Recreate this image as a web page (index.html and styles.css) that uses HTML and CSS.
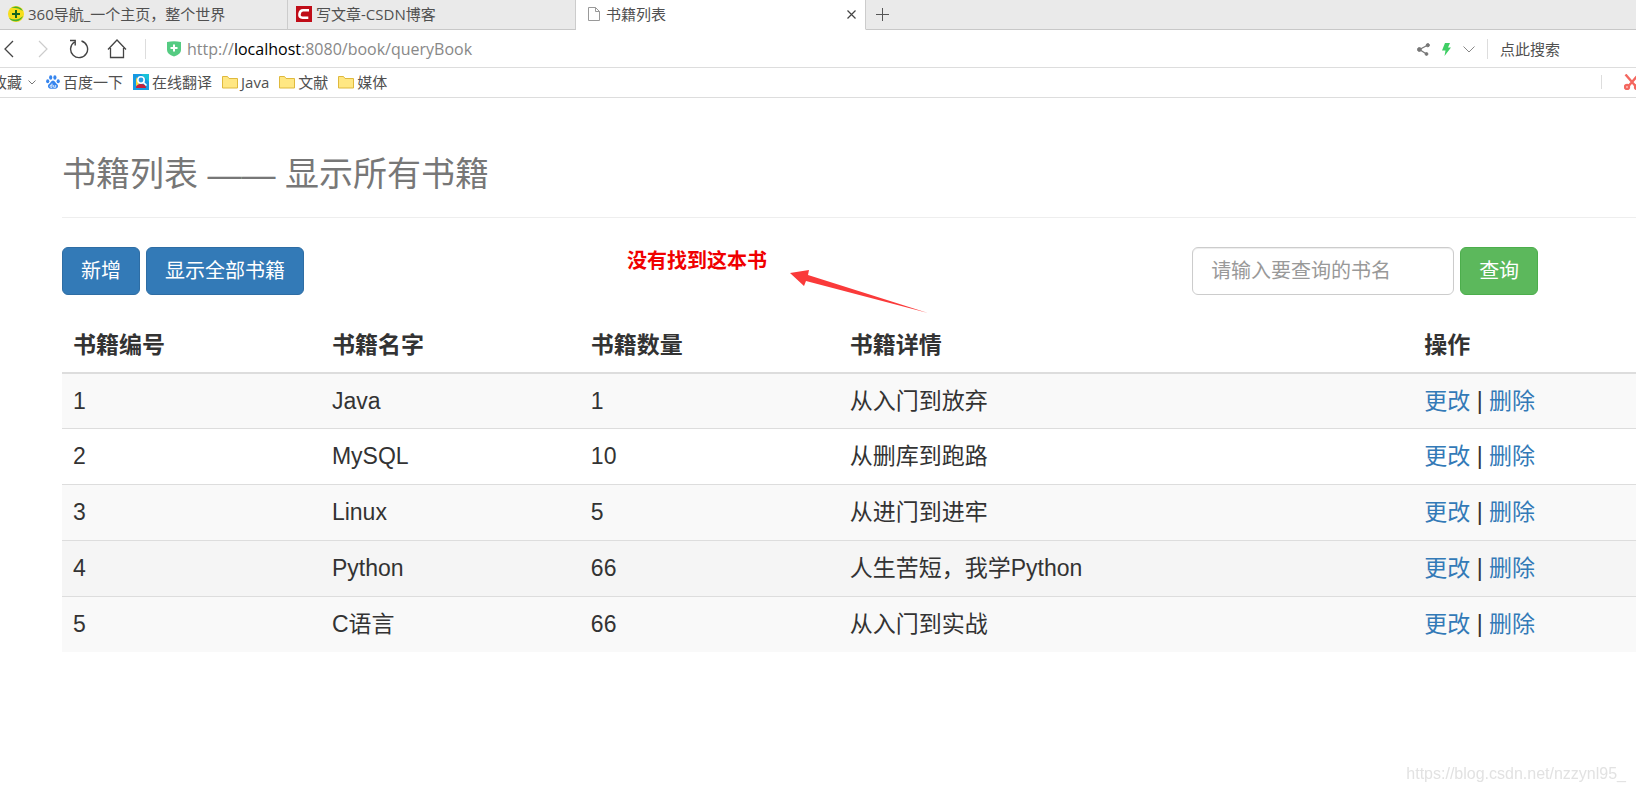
FILE: index.html
```html
<!DOCTYPE html>
<html lang="zh-CN">
<head>
<meta charset="utf-8">
<meta name="viewport" content="width=device-width, initial-scale=1">
<title>书籍列表</title>
<link rel="stylesheet" href="styles.css">
</head>
<body>
<header class="browser">
  <nav class="tabs" aria-label="标签页">
    <a class="tab" href="#">
      <svg class="icon" width="16" height="16" viewBox="0 0 16 16"><circle cx="8" cy="8" r="8" fill="#f7de1c"/><path d="M3 2A8 8 0 0 1 15 5Q9 1 3 2ZM15 10A8 8 0 0 1 1 12Q9 16 15 10Z" fill="#45b030"/><path d="M8 4v8M4 8h8" stroke="#17651f" stroke-width="2"/></svg>
      <span>360导航_一个主页，整个世界</span>
    </a>
    <a class="tab" href="#">
      <svg class="icon" width="16" height="16" viewBox="0 0 16 16"><rect width="16" height="16" fill="#c00d18"/><path d="M13 4.300H7Q4 4.300 3.500 8T6.500 11.700h5.800" fill="none" stroke="#fff" stroke-width="2.600"/></svg>
      <span>写文章-CSDN博客</span>
    </a>
    <a class="tab tab-active" href="#" aria-current="page">
      <svg class="icon" width="12" height="14" viewBox="0 0 12 14" fill="none" stroke="#999"><path d="M.5.500h7l4 4v9H.500zM7.500.500v4h4"/></svg>
      <span>书籍列表</span>
      <button class="icon-button tab-close" type="button" aria-label="关闭标签页"><svg width="9" height="9" viewBox="0 0 9 9" stroke="#444" stroke-width="1.200"><path d="M.5.500l8 8M8.500.500l-8 8"/></svg></button>
    </a>
    <button class="icon-button tab-new" type="button" aria-label="新建标签页"><svg width="13" height="13" viewBox="0 0 13 13" stroke="#555"><path d="M6.500 0v13M0 6.500h13"/></svg></button>
  </nav>

  <div class="address">
    <button class="icon-button" type="button" aria-label="后退"><svg width="10" height="18" viewBox="0 0 10 18" fill="none" stroke="#444" stroke-width="1.300"><path d="M9 1L1 9l8 8"/></svg></button>
    <button class="icon-button forward" type="button" aria-label="前进"><svg width="10" height="18" viewBox="0 0 10 18" fill="none" stroke="#ccc" stroke-width="1.200"><path d="M1 1l8 8-8 8"/></svg></button>
    <button class="icon-button" type="button" aria-label="刷新"><svg width="20" height="20" viewBox="0 0 20 20" fill="none" stroke="#444" stroke-width="1.400"><path d="M12.500 2A8.500 8.500 0 1 1 5.500 3M1 1.500h5.200v5"/></svg></button>
    <button class="icon-button" type="button" aria-label="主页"><svg width="20" height="20" viewBox="0 0 20 20" fill="none" stroke="#444" stroke-width="1.300"><path d="M1 10.500L10 1l9 9.500M3.500 9v9.500h13V9"/></svg></button>
    <span class="divider"></span>
    <div class="location">
      <svg width="14" height="16" viewBox="0 0 14 16"><path d="M0 1Q7-.5 14 1v8q0 4-7 6.500Q0 13 0 9z" fill="#55cb82"/><path d="M7 3.500v7M3.500 7h7" stroke="#fff" stroke-width="2"/></svg>
      <span>http://<span class="host">localhost</span>:8080/book/queryBook</span>
    </div>
    <div class="address-tools">
      <button class="icon-button" type="button" aria-label="分享"><svg width="13" height="13" viewBox="0 0 13 13" fill="#777" stroke="#777"><path d="M11 2L2.500 6.500 9.500 11" fill="none" stroke-width="1.300"/><circle cx="10.800" cy="2.200" r="1.600"/><circle cx="2.400" cy="6.500" r="1.900"/><circle cx="9.500" cy="11" r="1.400"/></svg></button>
      <button class="icon-button" type="button" aria-label="极速模式"><svg width="9" height="13" viewBox="0 0 9 13"><path d="M3 0h5L6 4.500h3L2.500 13l1-5.500H0z" fill="#3fce64"/></svg></button>
      <button class="icon-button" type="button" aria-label="更多"><svg width="12" height="7" viewBox="0 0 12 7" fill="none" stroke="#888"><path d="M.5.500L6 6l5.500-5.500"/></svg></button>
      <span class="divider"></span>
      <a class="search-hint" href="#">点此搜索</a>
    </div>
  </div>

  <nav class="bookmarks" aria-label="收藏栏">
    <a class="bookmark bookmark-first" href="#"><span>收藏</span><svg class="caret" width="8" height="5" viewBox="0 0 8 5" fill="none" stroke="#777"><path d="M.5.500L4 4l3.500-3.500"/></svg></a>
    <a class="bookmark" href="#"><svg width="14" height="14" viewBox="0 0 14 14" fill="#3685ee"><ellipse cx="1.700" cy="6.200" rx="1.600" ry="2"/><ellipse cx="4.700" cy="2.500" rx="1.600" ry="2.200"/><ellipse cx="8.900" cy="2.500" rx="1.600" ry="2.200"/><ellipse cx="12.200" cy="6.200" rx="1.600" ry="2"/><path d="M7 5.500C9 5.500 9.500 8 11.200 9.300c1.500 1.200 1 4.200-1.700 4.400H4.500c-2.700-.2-3.200-3.200-1.700-4.400C4.500 8 5 5.500 7 5.500z"/><path d="M6 8.500v3.800H4.600q-1.200-1.100 0-2.200H6M7.700 10v2.300h2V10" fill="none" stroke="#fff" stroke-width=".8"/></svg><span>百度一下</span></a>
    <a class="bookmark" href="#"><svg width="16" height="16" viewBox="0 0 16 16"><rect width="16" height="16" fill="#1599e2"/><path d="M8 0h8v8z" fill="#19c2d8"/><path d="M3 14q0-4 5-4t5 4z" fill="#c81f3b"/><path d="M3 3v9l3-2z" fill="#f8d83a"/><circle cx="8" cy="6" r="3.200" fill="#279fe1" stroke="#fff" stroke-width="1.600"/><path d="M10.500 8.500l3 3" stroke="#fff" stroke-width="1.600"/></svg><span>在线翻译</span></a>
    <a class="bookmark" href="#"><svg width="16" height="14" viewBox="0 0 16 14"><path d="M.5 1.500h5l1.500 2h8.500v9.500H.500z" fill="#ffe783" stroke="#dfb93d"/></svg><span>Java</span></a>
    <a class="bookmark" href="#"><svg width="16" height="14" viewBox="0 0 16 14"><path d="M.5 1.500h5l1.500 2h8.500v9.500H.500z" fill="#ffe783" stroke="#dfb93d"/></svg><span>文献</span></a>
    <a class="bookmark" href="#"><svg width="16" height="14" viewBox="0 0 16 14"><path d="M.5 1.500h5l1.500 2h8.500v9.500H.500z" fill="#ffe783" stroke="#dfb93d"/></svg><span>媒体</span></a>
    <div class="bookmark-tools">
      <span class="divider divider-short"></span>
      <button class="icon-button" type="button" aria-label="截图"><svg width="16" height="16" viewBox="0 0 16 16" fill="none" stroke="#f4675f" stroke-width="2.400"><path d="M1.500.500l9.500 11M14.500.500L5 11.500"/><circle cx="3" cy="13" r="2"/><circle cx="13" cy="13" r="2"/></svg></button>
    </div>
  </nav>
</header>

<main class="page">
  <h1 class="title">书籍列表 —— 显示所有书籍</h1>

  <div class="toolbar">
    <div class="actions">
      <button class="btn btn-primary" type="button">新增</button>
      <button class="btn btn-primary" type="button">显示全部书籍</button>
    </div>
    <div class="message">
      <strong>没有找到这本书</strong>
      <svg class="arrow" width="138" height="43" viewBox="0 0 138 43"><path d="M0 3L19 0l-1 5L138 43 16 11l-2 5z" fill="#fa3a3a"/></svg>
    </div>
    <form class="search">
      <input class="search-input" type="text" placeholder="请输入要查询的书名" aria-label="书名">
      <button class="btn btn-success" type="button">查询</button>
    </form>
  </div>

  <table class="books">
    <colgroup><col class="col-short"><col class="col-short"><col class="col-short"><col class="col-detail"><col></colgroup>
    <thead>
      <tr><th>书籍编号</th><th>书籍名字</th><th>书籍数量</th><th>书籍详情</th><th>操作</th></tr>
    </thead>
    <tbody>
      <tr><td>1</td><td>Java</td><td>1</td><td>从入门到放弃</td><td><a href="#">更改</a> | <a href="#">删除</a></td></tr>
      <tr><td>2</td><td>MySQL</td><td>10</td><td>从删库到跑路</td><td><a href="#">更改</a> | <a href="#">删除</a></td></tr>
      <tr><td>3</td><td>Linux</td><td>5</td><td>从进门到进牢</td><td><a href="#">更改</a> | <a href="#">删除</a></td></tr>
      <tr class="hovered"><td>4</td><td>Python</td><td>66</td><td>人生苦短，我学Python</td><td><a href="#">更改</a> | <a href="#">删除</a></td></tr>
      <tr><td>5</td><td>C语言</td><td>66</td><td>从入门到实战</td><td><a href="#">更改</a> | <a href="#">删除</a></td></tr>
    </tbody>
  </table>
</main>
<div class="watermark">https://blog.csdn.net/nzzynl95_</div>
</body>
</html>
```
FILE: styles.css
```css
* {
  box-sizing: border-box;
}

body {
  margin: 0;
  background: #fff;
  color: #333;
  font-family: "Liberation Sans", "Noto Sans CJK SC", sans-serif;
  overflow-x: hidden;
}

a {
  color: #337ab7;
  text-decoration: none;
}

svg {
  display: block;
  flex: none;
}

/* Browser chrome */
.browser {
  font-family: "Open Sans", "Noto Sans CJK SC", sans-serif;
  font-size: 15px;
  line-height: 20px;
  color: #505050;
  white-space: nowrap;
}

.browser a {
  color: inherit;
}

.icon-button {
  display: flex;
  padding: 0;
  border: 0;
  background: none;
}

.divider {
  width: 1px;
  height: 20px;
  background: #ddd;
}

.divider-short {
  height: 14px;
}

.tabs {
  display: flex;
  background: #eaeaea;
}

.tab {
  display: flex;
  align-items: center;
  gap: 4px;
  width: 288px;
  padding: 4px 8px 5px;
  border-right: 1px solid #ccc;
  border-bottom: 1px solid #c8c8c8;
}

.tab-active {
  gap: 6px;
  width: 290px;
  padding: 4px 9px 5px 12px;
  background: #fff;
  border-bottom-color: #fff;
}

.tab-close {
  margin-left: auto;
}

.tab-new {
  flex: 1;
  align-items: center;
  padding-left: 10px;
  border-bottom: 1px solid #c8c8c8;
}

.address {
  display: flex;
  align-items: center;
  padding: 8px 76px 7px 4px;
  gap: 18px;
  border-bottom: 1px solid #ddd;
}

.forward {
  margin: 0 3px 0 6px;
}

.location {
  display: flex;
  align-items: center;
  gap: 6px;
  padding-left: 3px;
  font-size: 16px;
  line-height: 22px;
  color: #888;
}

.host {
  color: #000;
}

.address-tools {
  display: flex;
  align-items: center;
  gap: 12px;
  margin-left: auto;
}

.bookmarks {
  display: flex;
  align-items: center;
  gap: 10px;
  padding: 4px 0 5px;
  border-bottom: 1px solid #ddd;
  overflow: hidden;
}

.bookmark {
  display: flex;
  align-items: center;
  gap: 3px;
}

.bookmark-first {
  gap: 6px;
  margin-left: -8px;
}

.bookmark-tools {
  display: flex;
  align-items: center;
  gap: 22px;
  margin: 0 -4px 0 auto;
}

/* Book list */
.page {
  padding: 52px 0 0 62px;
}

.title {
  margin: 0 0 29px;
  padding-bottom: 19px;
  border-bottom: 1px solid #eee;
  color: #777;
  font-size: 34px;
  font-weight: 400;
  line-height: 48px;
}

.toolbar {
  display: grid;
  grid-template-columns: 35.9% 35.9% 1fr;
  align-items: start;
}

.actions,
.search {
  display: flex;
  gap: 6px;
}

.btn {
  padding: 9px 18px;
  border: 1px solid;
  border-radius: 6px;
  color: #fff;
  font: inherit;
  font-size: 20px;
  line-height: 28px;
  white-space: nowrap;
}

.btn-primary {
  background: #337ab7;
  border-color: #2e6da4;
}

.btn-success {
  background: #5cb85c;
  border-color: #4cae4c;
}

.message {
  position: relative;
  color: #f00000;
  font-size: 20px;
  line-height: 28px;
}

.arrow {
  position: absolute;
  top: 23px;
  left: 163px;
}

.search-input {
  width: 262px;
  padding: 9px 18px;
  border: 1px solid #ccc;
  border-radius: 6px;
  box-shadow: inset 0 1px 1px rgba(0, 0, 0, 0.075);
  font: inherit;
  font-size: 20px;
  line-height: 28px;
}

.search-input::placeholder {
  color: #999;
}

.books {
  width: 100%;
  margin-top: 23px;
  border-collapse: collapse;
  table-layout: fixed;
  font-size: 23px;
  line-height: 33px;
}

.col-short {
  width: 16.45%;
}

.col-detail {
  width: 36.5%;
}

.books th,
.books td {
  padding: 11px;
  text-align: left;
}

.books th {
  padding-bottom: 10px;
  border-bottom: 2px solid #ddd;
}

.books td {
  border-top: 1px solid #ddd;
}

.books tbody tr:first-child td {
  padding-bottom: 10px;
}

.books tbody tr:nth-child(odd) {
  background: #f9f9f9;
}

.books tbody .hovered {
  background: #f5f5f5;
}

.watermark {
  position: fixed;
  right: 10px;
  bottom: 8px;
  color: #e2e2e2;
  font-size: 16px;
  line-height: 20px;
}
```
